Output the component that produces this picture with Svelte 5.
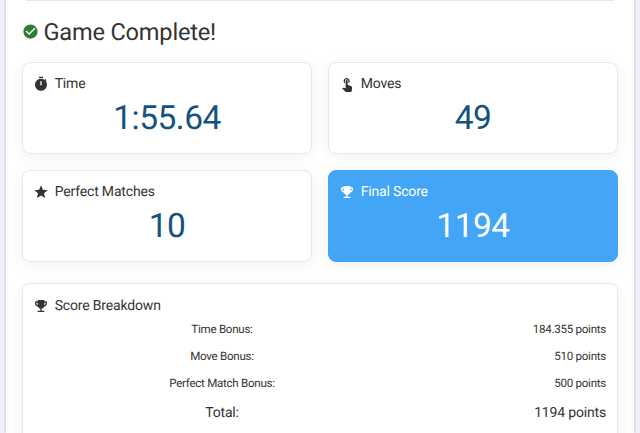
<script lang="ts">
	const icons = {
		check:
			'M12 2C6.5 2 2 6.5 2 12S6.5 22 12 22 22 17.5 22 12 17.5 2 12 2M10 17L5 12L6.41 10.59L10 14.17L17.59 6.58L19 8L10 17Z',
		timer:
			'M15 1H9v2h6V1zm4.03 6.39l1.42-1.42c-.43-.51-.9-.99-1.41-1.41l-1.42 1.42C16.07 4.74 14.12 4 12 4c-4.97 0-9 4.03-9 9s4.02 9 9 9 9-4.03 9-9c0-2.12-.74-4.07-1.97-5.61zM13 14h-2V8h2v6z',
		touch:
			'M9 11.24V7.5C9 6.12 10.12 5 11.5 5S14 6.12 14 7.5v3.74c1.21-.81 2-2.18 2-3.74C16 5.01 13.99 3 11.5 3S7 5.01 7 7.5c0 1.56.79 2.93 2 3.74zm9.84 4.63l-4.54-2.26c-.17-.07-.35-.11-.54-.11H13v-6c0-.83-.67-1.5-1.5-1.5S10 6.67 10 7.5v10.74l-3.43-.72c-.08-.01-.15-.03-.24-.03-.31 0-.59.13-.79.33l-.79.8 4.94 4.94c.27.27.65.44 1.06.44h6.79c.75 0 1.33-.55 1.44-1.28l.75-5.27c.01-.07.02-.14.02-.2 0-.62-.38-1.16-.91-1.38z',
		star: 'M12 17.27L18.18 21L16.54 13.97L22 9.24L14.81 8.62L12 2L9.19 8.62L2 9.24L7.45 13.97L5.82 21L12 17.27Z',
		trophy:
			'M19 5h-2V3H7v2H5c-1.1 0-2 .9-2 2v1c0 2.55 1.92 4.63 4.39 4.94.63 1.5 1.98 2.63 3.61 2.96V19H7v2h10v-2h-4v-3.1c1.63-.33 2.98-1.46 3.61-2.96C19.08 12.63 21 10.55 21 8V7c0-1.1-.9-2-2-2zM5 8V7h2v3.82C5.84 10.4 5 9.3 5 8zm14 0c0 1.3-.84 2.4-2 2.82V7h2v1z'
	};

	const stats = [
		{ label: 'Time', value: '1:55.64', icon: icons.timer },
		{ label: 'Moves', value: '49', icon: icons.touch },
		{ label: 'Perfect Matches', value: '10', icon: icons.star },
		{ label: 'Final Score', value: '1194', icon: icons.trophy, highlight: true }
	];

	const breakdown = [
		{ label: 'Time Bonus:', points: '184.355' },
		{ label: 'Move Bonus:', points: '510' },
		{ label: 'Perfect Match Bonus:', points: '500' }
	];
</script>

{#snippet icon(path: string)}
	<svg viewBox="0 0 24 24" aria-hidden="true"><path d={path} /></svg>
{/snippet}

<main>
	<div class="banner"></div>

	<h1>{@render icon(icons.check)}Game Complete!</h1>

	<div class="stats">
		{#each stats as stat}
			<section class="card" class:highlight={stat.highlight}>
				<h2>{@render icon(stat.icon)}{stat.label}</h2>
				<p class="value">{stat.value}</p>
			</section>
		{/each}
	</div>

	<section class="card breakdown">
		<h2>{@render icon(icons.trophy)}Score Breakdown</h2>
		<dl>
			{#each breakdown as row}
				<dt>{row.label}</dt>
				<dd>{row.points} points</dd>
			{/each}
			<dt class="total">Total:</dt>
			<dd class="total">1194 points</dd>
		</dl>
	</section>
</main>

<style>
	:global(body) {
		background: #f0f2f8;
		overflow: hidden;
	}

	main {
		box-sizing: border-box;
		height: 433px;
		margin: 0 6px;
		padding: 0 16px;
		background: #fff;
		box-shadow: 0 0 3px rgba(0, 0, 0, 0.25);
		color: #333;
		font-family: Roboto, sans-serif;
		text-rendering: geometricPrecision;
	}

	h1,
	h2,
	p,
	dl,
	dd {
		margin: 0;
		font-weight: 400;
	}

	svg {
		flex: none;
		fill: currentColor;
	}

	.banner {
		height: 1px;
		margin: 0 4px;
		background: #d9ecfd;
	}

	h1 {
		display: flex;
		align-items: center;
		height: 61px;
		font-size: 23.6px;
		letter-spacing: -0.2px;
	}

	h1 svg {
		width: 17px;
		height: 17px;
		margin: 0 5px 0 -0.5px;
		color: #2e7d32;
	}

	.stats {
		display: grid;
		grid-template-columns: 1fr 1fr;
		gap: 16px;
	}

	.card {
		box-sizing: border-box;
		height: 92px;
		padding: 11px;
		border: 1px solid #e8e8e8;
		border-radius: 8px;
		background: #fff;
		box-shadow: 0 3px 15px rgba(0, 0, 0, 0.06);
	}

	h2 {
		display: flex;
		align-items: center;
		height: 20px;
		font-size: 14px;
		letter-spacing: -0.17px;
	}

	h2 svg {
		width: 16px;
		height: 16px;
		margin: 0 5.7px 0 -1px;
	}

	.value {
		color: #15527d;
		font-size: 33.5px;
		letter-spacing: -0.5px;
		line-height: 50px;
		text-align: center;
	}

	.highlight {
		border-color: #42a5f5;
		background: #42a5f5;
		color: #fff;
	}

	.highlight .value {
		color: #fff;
	}

	.breakdown {
		height: 170px;
		margin-top: 21px;
		padding-top: 12px;
	}

	dl {
		display: grid;
		grid-template-columns: 376px 1fr;
		font-size: 11.6px;
		letter-spacing: -0.28px;
		line-height: 27px;
	}

	dt {
		text-align: center;
	}

	dd {
		text-align: right;
	}

	.total {
		font-size: 14px;
		letter-spacing: -0.17px;
		line-height: 32px;
	}
</style>
